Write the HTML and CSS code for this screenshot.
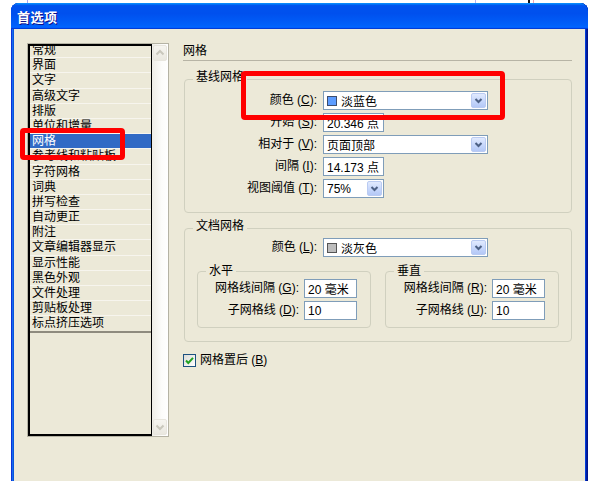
FILE: index.html
```html
<!DOCTYPE html>
<html lang="zh-CN">
<head>
<meta charset="utf-8">
<title>首选项</title>
<link rel="stylesheet" href="styles.css">
</head>
<body>
<div class="topstrip"></div>
<div class="window">
  <div class="titlebar"><span class="title">首选项</span></div>
  <div class="client">
    <div class="listbox">
      <ul class="list">
        <li class="first">常规</li>
        <li>界面</li>
        <li>文字</li>
        <li>高级文字</li>
        <li>排版</li>
        <li>单位和增量</li>
        <li class="sel">网格</li>
        <li>参考线和粘贴板</li>
        <li>字符网格</li>
        <li>词典</li>
        <li>拼写检查</li>
        <li>自动更正</li>
        <li>附注</li>
        <li>文章编辑器显示</li>
        <li>显示性能</li>
        <li>黑色外观</li>
        <li>文件处理</li>
        <li>剪贴板处理</li>
        <li>标点挤压选项</li>
        <li class="end"></li>
      </ul>
      <div class="scrollbar">
        <div class="sbtn"><svg width="12" height="12" viewBox="0 0 12 12"><path d="M2.5 7.5 L6 4 L9.5 7.5" fill="none" stroke="#C9C7BC" stroke-width="2"/></svg></div>
        <div class="sbtn"><svg width="12" height="12" viewBox="0 0 12 12"><path d="M2.5 4.5 L6 8 L9.5 4.5" fill="none" stroke="#C9C7BC" stroke-width="2"/></svg></div>
      </div>
    </div>

    <div class="panel">
      <div class="heading">网格</div>

      <fieldset class="group g1">
        <legend>基线网格</legend>
        <div class="form">
          <span class="lbl">颜色 (<u>C</u>):</span>
          <div class="select wide"><span class="swatch blue"></span>淡蓝色<span class="arrow"><svg width="13" height="13" viewBox="0 0 13 13"><path d="M3.5 5 L6.5 8 L9.5 5" fill="none" stroke="#4D6185" stroke-width="2"/></svg></span></div>
          <span class="lbl">开始 (<u>S</u>):</span>
          <div class="input narrow">20.346 点</div>
          <span class="lbl">相对于 (<u>V</u>):</span>
          <div class="select wide">页面顶部<span class="arrow"><svg width="13" height="13" viewBox="0 0 13 13"><path d="M3.5 5 L6.5 8 L9.5 5" fill="none" stroke="#4D6185" stroke-width="2"/></svg></span></div>
          <span class="lbl">间隔 (<u>I</u>):</span>
          <div class="input narrow">14.173 点</div>
          <span class="lbl">视图阈值 (<u>T</u>):</span>
          <div class="select narrow">75%<span class="arrow"><svg width="13" height="13" viewBox="0 0 13 13"><path d="M3.5 5 L6.5 8 L9.5 5" fill="none" stroke="#4D6185" stroke-width="2"/></svg></span></div>
        </div>
      </fieldset>

      <fieldset class="group g2">
        <legend>文档网格</legend>
        <div class="form">
          <span class="lbl">颜色 (<u>L</u>):</span>
          <div class="select wide"><span class="swatch gray"></span>淡灰色<span class="arrow"><svg width="13" height="13" viewBox="0 0 13 13"><path d="M3.5 5 L6.5 8 L9.5 5" fill="none" stroke="#4D6185" stroke-width="2"/></svg></span></div>
        </div>
        <div class="subrow">
          <fieldset class="sub">
            <legend>水平</legend>
            <div class="subform">
              <span class="lbl">网格线间隔 (<u>G</u>):</span>
              <div class="input">20 毫米</div>
              <span class="lbl">子网格线 (<u>D</u>):</span>
              <div class="input">10</div>
            </div>
          </fieldset>
          <fieldset class="sub">
            <legend>垂直</legend>
            <div class="subform">
              <span class="lbl">网格线间隔 (<u>R</u>):</span>
              <div class="input">20 毫米</div>
              <span class="lbl">子网格线 (<u>U</u>):</span>
              <div class="input">10</div>
            </div>
          </fieldset>
        </div>
      </fieldset>

      <div class="checkrow">
        <span class="checkbox"><svg width="11" height="11" viewBox="0 0 11 11"><path d="M2 5.5 L4.3 8 L9 2.8" fill="none" stroke="#21A121" stroke-width="2"/></svg></span>
        <span>网格置后 (<u>B</u>)</span>
      </div>
    </div>
  </div>
</div>
<div class="mark mark-list"></div>
<div class="mark mark-color"></div>
</body>
</html>
```
FILE: styles.css
```css
html, body {
  margin: 0;
  padding: 0;
}
body {
  background: #fff;
  width: 600px;
  height: 481px;
  overflow: hidden;
  position: relative;
  font-family: "Liberation Sans", "Noto Sans CJK SC", sans-serif;
  font-size: 12px;
  color: #000;
}
u {
  text-underline-offset: 1px;
}

.topstrip {
  height: 3px;
  background:
    linear-gradient(90deg, transparent 27px, #ABA6F0 27px, #ABA6F0 28px, transparent 28px),
    linear-gradient(90deg, transparent 475px, #B6B1F2 475px, #B6B1F2 476px, transparent 476px),
    linear-gradient(90deg, transparent 528px, #111 528px, #111 530px, transparent 530px),
    linear-gradient(90deg, transparent 533px, #F2A4B4 533px, #F2A4B4 534px, transparent 534px);
}

.window {
  margin-left: 11px;
  width: 577px;
  height: 478px;
  display: flex;
  flex-direction: column;
  border-radius: 8px 8px 0 0;
  background: #0855DD;
  box-shadow:
    inset 1px 0 #0831D9,
    inset -1px 0 #00138C,
    inset 2px 0 #166AEE,
    inset -2px 0 #001EA0,
    inset 3px 0 #0855DD,
    inset -3px 0 #003BDA;
}

.titlebar {
  height: 26px;
  flex: none;
  border-radius: 8px 8px 0 0;
  background: linear-gradient(to bottom, #0997FF 0%, #0053EE 10%, #0050EE 40%, #0060FA 85%, #0066FF 92%, #005BFF 95%, #003DD7 97%, #003DD7 100%);
  display: flex;
  align-items: center;
  padding-left: 6px;
}
.title {
  color: #fff;
  font-weight: bold;
  font-size: 13px;
  letter-spacing: 0.5px;
  text-shadow: 1px 1px #0F1089;
}

.client {
  flex: 1;
  margin: 0 3px;
  background: #ECE9D8;
  display: flex;
  align-items: flex-start;
  gap: 14px;
  padding: 14px 13px 0 13px;
}

/* list */
.listbox {
  width: 142px;
  height: 394px;
  box-sizing: border-box;
  border: 1px solid #B5B3A4;
  display: flex;
  flex: none;
}
.list {
  list-style: none;
  margin: 0;
  padding: 0;
  width: 126px;
  box-sizing: border-box;
  border-style: solid;
  border-color: #000;
  border-width: 2px 1px 2px 2px;
  overflow: hidden;
}
.list li {
  height: 15.2px;
  box-sizing: border-box;
  line-height: 14px;
  padding-left: 2px;
  border-bottom: 1px solid #F7F5EE;
  white-space: nowrap;
}
.list li.first {
  margin-top: -3px;
}
.list li.sel {
  background: #316AC5;
  color: #fff;
}
.list li.end {
  border-bottom: none;
  border-top: 2px solid #8E8B7E;
  height: 2px;
  margin-top: -1px;
}
.scrollbar {
  flex: 1;
  display: flex;
  flex-direction: column;
  justify-content: space-between;
  background: linear-gradient(90deg, #EEEDE6, #FCFCFA 60%, #FFFFFF);
  padding: 1px 0;
}
.sbtn {
  height: 14px;
  margin: 0 1px;
  border-radius: 2px;
  background: linear-gradient(#F6F5F0, #EAE8E0);
  border: 1px solid #E8E6DE;
  display: flex;
  align-items: center;
  justify-content: center;
}

/* panel */
.panel {
  width: 389px;
  flex: none;
}
.heading {
  line-height: 17px;
  border-bottom: 1px solid #B7B4A5;
}

fieldset {
  margin: 0;
  padding: 0;
  min-width: 0;
  border: 1px solid #D0D0BF;
  border-radius: 4px;
}
legend {
  padding: 0 3px 4px;
  margin-left: 8px;
  line-height: 16px;
}
.group {
  margin-left: 1px;
}
.g1 {
  margin-top: 8px;
  padding-bottom: 14px;
}
.g2 {
  margin-top: 5px;
  padding-bottom: 13px;
}
.form {
  display: grid;
  grid-template-columns: 132px auto;
  column-gap: 6px;
  row-gap: 3px;
  justify-items: start;
}
.g1 .form {
  padding-top: 2px;
}
.lbl {
  justify-self: end;
  line-height: 19px;
  white-space: nowrap;
}

.select, .input {
  height: 19px;
  box-sizing: border-box;
  border: 1px solid #7F9DB9;
  background: #fff;
  display: flex;
  align-items: center;
  padding-left: 3px;
  white-space: nowrap;
}
.wide {
  width: 165px;
}
.narrow {
  width: 61px;
}
.arrow {
  margin-left: auto;
  width: 15px;
  height: 15px;
  margin-right: 1px;
  box-sizing: border-box;
  border: 1px solid #BACBF2;
  border-radius: 2px;
  background: linear-gradient(#E1EAFE, #C4D5FB 60%, #B4C8F6);
  display: flex;
  align-items: center;
  justify-content: center;
}
.swatch {
  width: 10px;
  height: 10px;
  box-sizing: border-box;
  margin-right: 4px;
  border: 1px solid #3D4E6E;
}
.swatch.blue {
  background: #5C9CFF;
}
.swatch.gray {
  background: #BDBDBD;
  border-color: #555;
}

.subrow {
  display: flex;
  gap: 14px;
  padding: 0 12px;
  margin-top: 6px;
}
.sub {
  width: 174px;
  box-sizing: border-box;
  padding-bottom: 7px;
}
.sub legend {
  padding: 0 3px;
}
.subform {
  display: grid;
  grid-template-columns: 101px 53px;
  column-gap: 5px;
  row-gap: 3px;
}
.subform .input {
  width: 53px;
}

.checkrow {
  margin-top: 12px;
  display: flex;
  align-items: center;
  gap: 4px;
  line-height: 13px;
}
.checkbox {
  width: 13px;
  height: 13px;
  box-sizing: border-box;
  border: 1px solid #1C5180;
  background: linear-gradient(135deg, #DCDCD7, #FFFFFF);
  display: flex;
  align-items: center;
  justify-content: center;
}

/* red annotation marks */
.mark {
  position: absolute;
  box-sizing: border-box;
  border: 5px solid #FF0000;
  border-radius: 4px;
}
.mark-list {
  left: 20px;
  top: 128px;
  width: 105px;
  height: 32px;
}
.mark-color {
  left: 241px;
  top: 71px;
  width: 264px;
  height: 49px;
}
```
